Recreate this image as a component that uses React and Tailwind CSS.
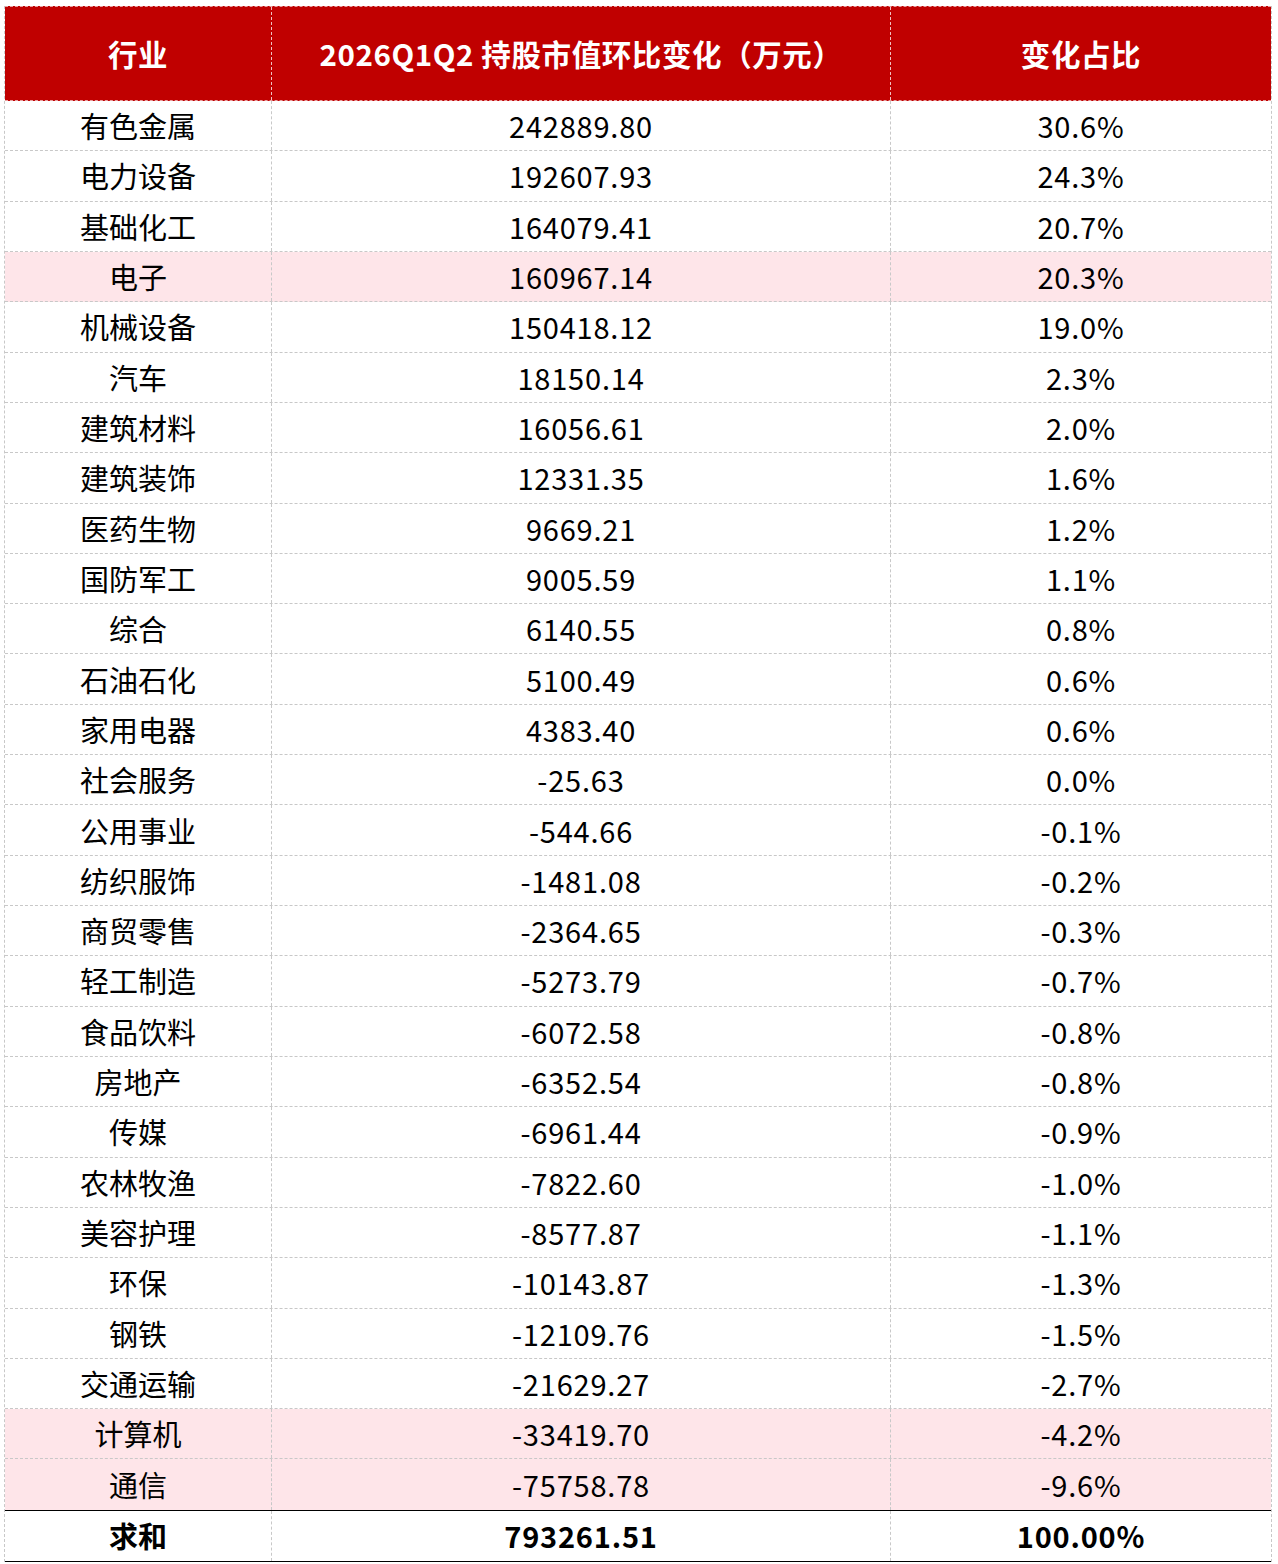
import React from 'react';

const rows = [
  ['有色金属', '242889.80', '30.6%'],
  ['电力设备', '192607.93', '24.3%'],
  ['基础化工', '164079.41', '20.7%'],
  ['电子', '160967.14', '20.3%', true],
  ['机械设备', '150418.12', '19.0%'],
  ['汽车', '18150.14', '2.3%'],
  ['建筑材料', '16056.61', '2.0%'],
  ['建筑装饰', '12331.35', '1.6%'],
  ['医药生物', '9669.21', '1.2%'],
  ['国防军工', '9005.59', '1.1%'],
  ['综合', '6140.55', '0.8%'],
  ['石油石化', '5100.49', '0.6%'],
  ['家用电器', '4383.40', '0.6%'],
  ['社会服务', '-25.63', '0.0%'],
  ['公用事业', '-544.66', '-0.1%'],
  ['纺织服饰', '-1481.08', '-0.2%'],
  ['商贸零售', '-2364.65', '-0.3%'],
  ['轻工制造', '-5273.79', '-0.7%'],
  ['食品饮料', '-6072.58', '-0.8%'],
  ['房地产', '-6352.54', '-0.8%'],
  ['传媒', '-6961.44', '-0.9%'],
  ['农林牧渔', '-7822.60', '-1.0%'],
  ['美容护理', '-8577.87', '-1.1%'],
  ['环保', '-10143.87', '-1.3%'],
  ['钢铁', '-12109.76', '-1.5%'],
  ['交通运输', '-21629.27', '-2.7%'],
  ['计算机', '-33419.70', '-4.2%', true],
  ['通信', '-75758.78', '-9.6%', true],
];

const font = { fontFamily: '"Microsoft YaHei", "Noto Sans CJK SC", "Noto Sans", sans-serif' };

export default function App() {
  return (
    <div className="bg-white w-[1278px] h-[1564px] pt-[6px] pl-[4px]" style={font}>
      <div className="w-[1268px] border-l border-r border-dashed border-[#c8c8c8]">
        <div className="grid grid-cols-[267px_619px_380px] h-[95px] bg-[#c00000] text-white font-bold text-[29.5px] tracking-[0.6px] border-t border-b border-dashed border-[#e8a0a0]">
          <div className="flex items-center justify-center border-r border-dashed border-[#f0c0c0]">行业</div>
          <div className="flex items-center justify-center border-r border-dashed border-[#f0c0c0]">2026Q1Q2 持股市值环比变化（万元）</div>
          <div className="flex items-center justify-center">变化占比</div>
        </div>
        {rows.map(([name, val, pct, hl], i) => (
          <div
            key={name}
            className={`grid grid-cols-[267px_619px_380px] h-[50.32px] text-[29px] text-black leading-none ${hl ? 'bg-[#fee5e9]' : 'bg-white'} ${i === rows.length - 1 ? '' : 'border-b border-dashed border-[#c8c8c8]'}`}
          >
            <div className="flex items-center justify-center border-r border-dashed border-[#c8c8c8]">{name}</div>
            <div className="flex items-center justify-center tracking-[0.8px] border-r border-dashed border-[#c8c8c8]">{val}</div>
            <div className="flex items-center justify-center tracking-[0.8px]">{pct}</div>
          </div>
        ))}
        <div className="grid grid-cols-[267px_619px_380px] h-[52px] text-[29px] font-bold text-black leading-none border-t-[1.5px] border-b-[1.5px] border-black">
          <div className="flex items-center justify-center border-r border-dashed border-[#c8c8c8]">求和</div>
          <div className="flex items-center justify-center tracking-[0.8px] border-r border-dashed border-[#c8c8c8]">793261.51</div>
          <div className="flex items-center justify-center tracking-[0.8px]">100.00%</div>
        </div>
      </div>
    </div>
  );
}
